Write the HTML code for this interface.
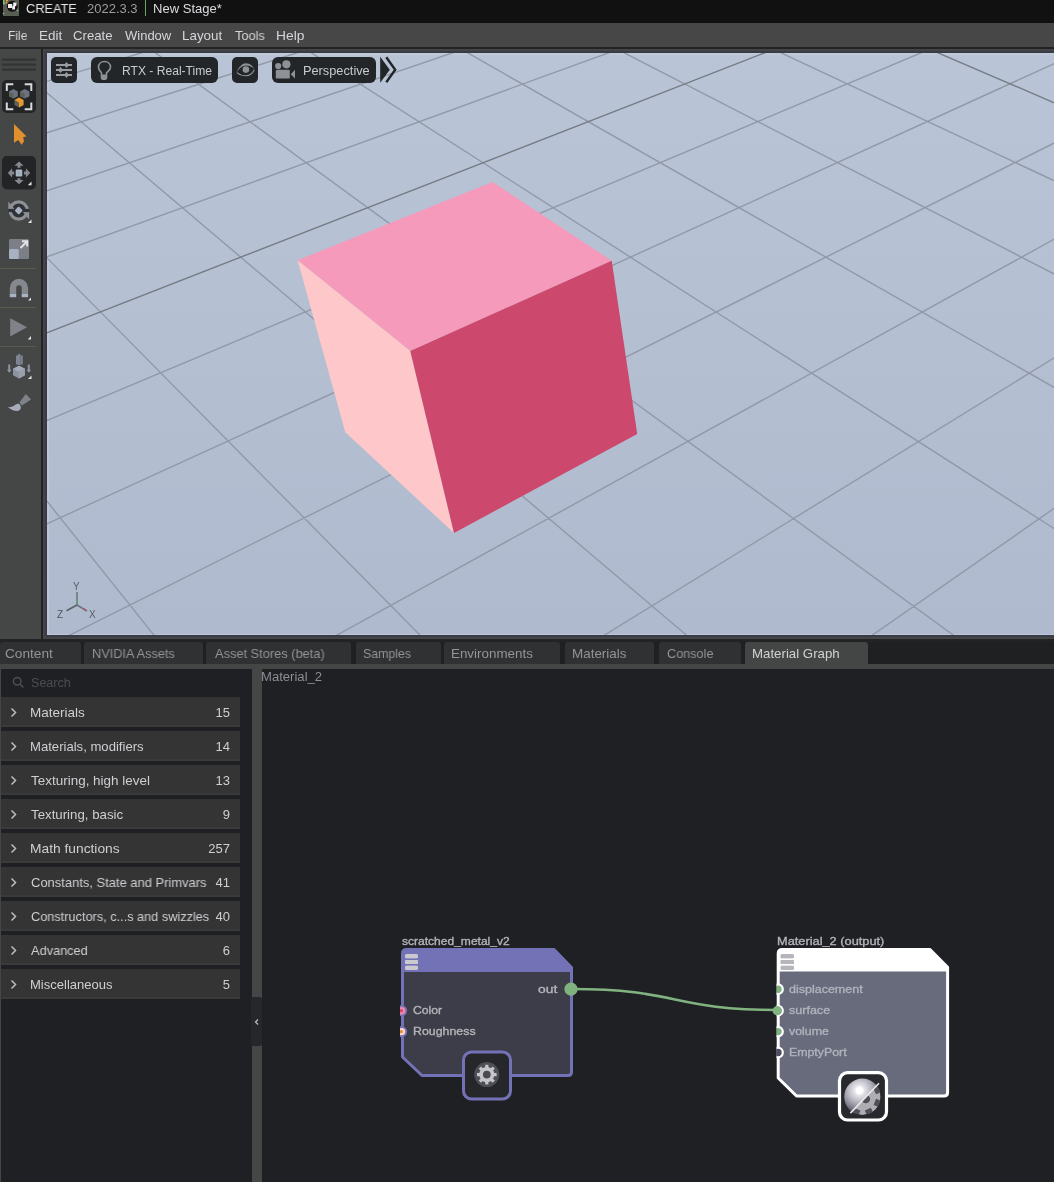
<!DOCTYPE html>
<html><head><meta charset="utf-8">
<style>
*{margin:0;padding:0;box-sizing:border-box}
html,body{width:1054px;height:1182px;overflow:hidden;background:#1f2023;font-family:"Liberation Sans",sans-serif;position:relative}
.a{position:absolute}
.t{position:absolute;white-space:nowrap;line-height:1;will-change:transform}
</style></head><body>
<div class="a" style="left:0;top:0;width:1054px;height:23px;background:#111111"></div>
<svg class="a" style="left:0;top:0" width="22" height="22">
<rect x="3" y="0" width="16" height="16" fill="#5a5e52"/>
<path d="M3.8 0V3.6H5" stroke="#88d088" stroke-width="1.3" fill="none"/>
<rect x="6" y="0" width="2" height="1.2" fill="#f0a030"/><circle cx="6.5" cy="2.5" r="0.9" fill="#f0a030"/>
<circle cx="12.3" cy="6.3" r="5.5" fill="#141414"/>
<rect x="8" y="4" width="4.2" height="4" fill="#f2eef2"/>
<path d="M13.2 2.5H16.5V5.5L15 6.5V9.5H12.2V6.5L13.2 5.5Z" fill="#f2eef2"/>
<circle cx="17.5" cy="10.5" r="0.8" fill="#80c880"/><circle cx="3.5" cy="13.5" r="0.8" fill="#80c880"/>
</svg>
<div class="t" style="left:25.96px;top:1.50px;font-size:13px;color:#e6e6ea;transform:scaleX(0.9828);transform-origin:0 0">CREATE</div>
<div class="t" style="left:86.65px;top:1.50px;font-size:13px;color:#9c9ca0;transform:scaleX(0.9973);transform-origin:0 0">2022.3.3</div>
<div class="a" style="left:145px;top:0;width:1px;height:16px;background:#6aa86a"></div>
<div class="t" style="left:153.36px;top:1.50px;font-size:13px;color:#dcdce0;transform:scaleX(1.0024);transform-origin:0 0">New Stage*</div>
<div class="a" style="left:0;top:23px;width:1054px;height:24px;background:#464746"></div>
<div class="t" style="left:8.44px;top:29.30px;font-size:13px;color:#d6d6da;transform:scaleX(0.9272);transform-origin:0 0">File</div>
<div class="t" style="left:38.72px;top:29.30px;font-size:13px;color:#d6d6da;transform:scaleX(1.0351);transform-origin:0 0">Edit</div>
<div class="t" style="left:73.44px;top:29.30px;font-size:13px;color:#d6d6da;transform:scaleX(1.0142);transform-origin:0 0">Create</div>
<div class="t" style="left:124.64px;top:29.30px;font-size:13px;color:#d6d6da;transform:scaleX(0.9910);transform-origin:0 0">Window</div>
<div class="t" style="left:182.23px;top:29.30px;font-size:13px;color:#d6d6da;transform:scaleX(1.0292);transform-origin:0 0">Layout</div>
<div class="t" style="left:234.74px;top:29.30px;font-size:13px;color:#d6d6da;transform:scaleX(0.9818);transform-origin:0 0">Tools</div>
<div class="t" style="left:275.80px;top:29.30px;font-size:13px;color:#d6d6da;transform:scaleX(1.0614);transform-origin:0 0">Help</div>
<div class="a" style="left:0;top:47px;width:1054px;height:2px;background:#222324"></div>
<div class="a" style="left:0;top:49px;width:41px;height:590px;background:#454646"></div>
<div class="a" style="left:41px;top:49px;width:2px;height:593px;background:#222324"></div>
<svg class="a" style="left:0;top:49px" width="41" height="380" viewBox="0 49 41 380">
<g fill="#323333"><rect x="2" y="58.5" width="34" height="2.2"/><rect x="2" y="63.5" width="34" height="2.2"/><rect x="2" y="68.5" width="34" height="2.2"/></g>
<rect x="2" y="80" width="34" height="33" rx="5" fill="#222426"/>
<g stroke="#d9d9de" stroke-width="2" fill="none">
<path d="M6.8 91V84.3H13.3"/><path d="M24.7 84.3H31.3V91"/><path d="M6.8 102.5V109.3H13.3"/><path d="M24.7 109.3H31.3V102.5"/>
</g>
<g>
<polygon points="13.4,89 17.8,91.4 17.8,96.2 13.4,98.6 9,96.2 9,91.4" fill="#6c7282"/>
<polygon points="9,91.4 13.4,93.8 13.4,98.6 9,96.2" fill="#5f6356"/>
<polygon points="24.8,89 29.4,91.4 29.4,96.2 24.8,98.6 20.2,96.2 20.2,91.4" fill="#6c7282"/>
<polygon points="20.2,91.4 24.8,93.8 24.8,98.6 20.2,96.2" fill="#5f6356"/>
<polygon points="19,97.6 23.5,100.1 23.5,105 19,107.5 14.5,105 14.5,100.1" fill="#5f6458"/>
<polygon points="19,97.6 23.5,100.1 23.5,105 19,107.5 19,102.6 14.5,100.1" fill="#e8962e"/>
</g>
<polygon points="14,124 26.6,136.6 23.2,137 24,141.5 21.5,144.8 18.3,140 14,142.8" fill="#e0902e"/>
<rect x="2" y="156" width="34" height="33.5" rx="5" fill="#222426"/>
<g fill="#85888e">
<polygon points="19,161.6 23.6,165.7 20.5,165.7 20.5,167.8 17.5,167.8 17.5,165.7 14.4,165.7"/>
<polygon points="19,184.2 23.6,180.1 20.5,180.1 20.5,178.2 17.5,178.2 17.5,180.1 14.4,180.1"/>
<polygon points="7.8,172.9 12.1,168.3 12.1,171.4 14.1,171.4 14.1,174.4 12.1,174.4 12.1,177.5"/>
<polygon points="30.2,172.9 25.9,168.3 25.9,171.4 23.9,171.4 23.9,174.4 25.9,174.4 25.9,177.5"/>
</g>
<rect x="15.7" y="169.6" width="6.6" height="6.8" rx="1" fill="#a9b2c3"/>
<circle cx="18.6" cy="173.3" r="0.6" fill="#5fb060"/>
<polygon points="31.5,181.5 31.5,185.3 27.8,185.3" fill="#e6e6ea"/>
<circle cx="18.7" cy="210.5" r="10.3" fill="#2f3238"/>
<circle cx="18.7" cy="210.5" r="8.65" fill="none" stroke="#8d9095" stroke-width="3.3"/>
<polygon points="8.3,201.5 8.3,209 14.6,209" fill="#8d9095"/>
<polygon points="29.1,219.6 29.1,212 22.8,212" fill="#8d9095"/>
<rect x="8.2" y="208.9" width="6.4" height="3.2" fill="#2f3238"/>
<rect x="22.8" y="208.9" width="6.4" height="3.2" fill="#2f3238"/>
<rect x="15.8" y="207.6" width="5.8" height="5.8" rx="1" transform="rotate(45 18.7 210.5)" fill="#a9b2c3"/>
<polygon points="31.5,219.5 31.5,223 28,223" fill="#e6e6ea"/>
<rect x="9" y="239" width="20" height="20" rx="1.5" fill="#7c7f85"/>
<rect x="9" y="249" width="9.8" height="10" rx="1.5" fill="#a7b1c2"/>
<path d="M20.5 248L27 241.5M22 241.3H27.2V246.5" stroke="#e2e2e6" stroke-width="2" fill="none"/>
<rect x="0" y="268" width="36" height="1" fill="#5a5b50"/>
<path d="M9.8 293.5V288A9.15 9.15 0 0 1 28.1 288V293.5H21.7V288A2.75 2.75 0 0 0 16.2 288V293.5Z" fill="#85888e"/>
<rect x="9.8" y="293.6" width="6.4" height="3.6" fill="#a9b3c4"/>
<rect x="21.7" y="293.6" width="6.4" height="3.6" fill="#a9b3c4"/>
<polygon points="31,297.5 31,300.5 28,300.5" fill="#e6e6ea"/>
<rect x="0" y="307" width="36" height="1" fill="#5a5b50"/>
<polygon points="10.2,318.2 27.1,327.3 10.2,336.5" fill="#7f8288"/>
<polygon points="31,336 31,339.5 27.8,339.5" fill="#e6e6ea"/>
<rect x="0" y="346" width="36" height="1" fill="#5a5b50"/>
<g fill="#7f8592"><rect x="16" y="355.5" width="2.2" height="9"/><rect x="18" y="354" width="2.4" height="11"/><rect x="20.5" y="355.5" width="2.2" height="9"/></g>
<polygon points="19,365.8 25,368.8 25,375.3 19,378.4 13,375.3 13,368.8" fill="#8d93a0"/>
<polygon points="19,365.8 25,368.8 19,371.8 13,368.8" fill="#a6adba"/>
<polygon points="19,371.8 25,368.8 25,375.3 19,378.4" fill="#9a9fab"/>
<g fill="#8d93a0"><rect x="8.2" y="364.5" width="2" height="5.5"/><polygon points="6.8,369.8 11.6,369.8 9.2,372.8"/>
<rect x="27.8" y="364.5" width="2" height="5.5"/><polygon points="26.4,369.8 31.2,369.8 28.8,372.8"/></g>
<polygon points="31.5,375.5 31.5,379 28,379" fill="#e6e6ea"/>
<polygon points="25.8,393.9 31.1,399.5 22,405.4 19.4,402.4" fill="#7f8288"/>
<path d="M7.2 406.4C11 408.8 14 405 17 404C19.5 403.3 21 405.5 20.8 408C20.2 411.8 14 412.5 7.2 406.4Z" fill="#a5adbc"/>
</svg>
<div class="a" style="left:43px;top:49px;width:1011px;height:590px;background:#444646"></div>
<div class="a" style="left:0;top:639px;width:1054px;height:3px;background:#222324"></div>
<svg class="a" style="left:0;top:0" width="1054" height="640" viewBox="0 0 1054 640">
<defs>
<linearGradient id="vbg" x1="0" y1="0" x2="0" y2="1">
<stop offset="0" stop-color="#b9c4d6"/><stop offset="1" stop-color="#afbace"/>
</linearGradient>
<clipPath id="vc"><rect x="47" y="53" width="1007" height="582"/></clipPath>
</defs>
<rect x="47" y="53" width="1007" height="582" fill="url(#vbg)"/>
<path d="M46 636V52H1054M46 636H1054" stroke="#393c48" stroke-width="2" fill="none"/>
<path d="M48 635V54H1054" stroke="#c8cdd8" stroke-width="2" fill="none" opacity="0.55"/>
<path d="M47 634.5H1054" stroke="#c9d1de" stroke-width="1" fill="none" opacity="0.5"/>
<g clip-path="url(#vc)">
<path d="M-299.7 -201.1L-7440.6 1089.5M1858.8 -205.0L8697.1 1148.1M-192.7 -201.3L-7104.5 1090.7M1750.0 -204.8L8314.5 1146.8M-85.6 -201.5L-6767.5 1092.0M1641.2 -204.6L7933.0 1145.4M21.6 -201.7L-6429.5 1093.2M1532.6 -204.4L7552.7 1144.0M128.9 -201.9L-6090.5 1094.4M1424.0 -204.2L7173.5 1142.6M236.3 -202.1L-5750.6 1095.7M1315.6 -204.0L6795.5 1141.2M343.8 -202.3L-5409.7 1096.9M1207.2 -203.8L6418.7 1139.9M451.4 -202.5L-5067.8 1098.1M1099.0 -203.6L6042.9 1138.5M559.1 -202.6L-4724.9 1099.4M990.8 -203.4L5668.3 1137.1M666.9 -202.8L-4381.0 1100.6M882.7 -203.2L5294.8 1135.8M774.8 -203.0L-4036.1 1101.9M774.8 -203.0L4922.5 1134.4M882.7 -203.2L-3690.2 1103.1M666.9 -202.8L4551.2 1133.1M990.8 -203.4L-3343.3 1104.4M559.1 -202.6L4181.1 1131.7M1099.0 -203.6L-2995.5 1105.7M451.4 -202.5L3812.1 1130.4M1207.2 -203.8L-2646.6 1106.9M1315.6 -204.0L-2296.6 1108.2M236.3 -202.1L3077.3 1127.7M128.9 -201.9L2711.6 1126.4M1532.6 -204.4L-1593.7 1110.8M21.6 -201.7L2347.0 1125.1M1641.2 -204.6L-1240.7 1112.0M-85.6 -201.5L1983.4 1123.8M1750.0 -204.8L-886.7 1113.3M-192.7 -201.3L1620.9 1122.4M1858.8 -205.0L-531.6 1114.6M-299.7 -201.1L1259.5 1121.1M1967.7 -205.2L-175.5 1115.9M-406.6 -200.9L899.2 1119.8M2076.8 -205.4L181.7 1117.2M-513.5 -200.7L539.9 1118.5M2185.9 -205.6L539.9 1118.5M-620.2 -200.5L181.7 1117.2M2295.1 -205.8L899.2 1119.8M-726.8 -200.3L-175.5 1115.9M2404.4 -206.0L1259.5 1121.1M-833.4 -200.1L-531.6 1114.6M2513.9 -206.2L1620.9 1122.4M-939.9 -199.9L-886.7 1113.3M2623.4 -206.4L1983.4 1123.8M-1046.2 -199.8L-1240.7 1112.0M2733.0 -206.6L2347.0 1125.1M-1152.5 -199.6L-1593.7 1110.8M2842.7 -206.8L2711.6 1126.4M-1258.7 -199.4L-1945.7 1109.5M2952.5 -207.0L3077.3 1127.7M-1364.7 -199.2L-2296.6 1108.2M3062.4 -207.2L3444.2 1129.1M-1470.7 -199.0L-2646.6 1106.9M3172.5 -207.3L3812.1 1130.4M-1576.6 -198.8L-2995.5 1105.7" stroke="#9199a8" stroke-width="1.4" fill="none"/>
<path d="M343.8 -202.3L3444.2 1129.1M1424.0 -204.2L-1945.7 1109.5" stroke="#767b84" stroke-width="1.4" fill="none"/>
<polygon points="492.7,182.1 297.6,260.2 410.3,351 611.7,260.8" fill="#f69abb"/>
<polygon points="297.6,260.2 410.3,351 454,533 345.3,432.2" fill="#fec8ca"/>
<polygon points="410.3,351 611.7,260.8 637.2,434 454,533" fill="#cc486c"/>
</g>
<!-- axis gizmo -->
<g stroke-width="1.6" fill="none">
<path d="M77 605V592" stroke="#6f747c"/><path d="M77 605L66.5 610.8" stroke="#5c6068"/><path d="M77 605L87 611" stroke="#6f747c"/>
</g>
<circle cx="84.5" cy="609.5" r="1" fill="#d04060"/>
<rect x="76.2" y="599" width="1.6" height="5" fill="#5ea070"/>
<!-- overlay buttons -->
<rect x="51" y="57" width="26" height="26" rx="5" fill="#232629"/>
<g stroke="#9a9da3" stroke-width="2"><path d="M56 65H72M56 70H72M56 75H72"/></g>
<g fill="#9a9da3"><polygon points="66.5,62 69,65 66.5,68 64,65"/><polygon points="60.5,67 63,70 60.5,73 58,70"/><polygon points="66.5,72 69,75 66.5,78 64,75"/></g>
<rect x="91" y="57" width="127" height="26" rx="6" fill="#232629"/>
<path d="M104.5 61.5C101 61.5 98.5 64 98.5 67.2C98.5 70 100.5 71.3 101.5 73V77.5C101.5 78.8 102.5 79.3 104 79.3C105.5 79.3 106.5 78.8 106.5 77.5V73C107.5 71.3 110.5 70 110.5 67.2C110.5 64 108 61.5 104.5 61.5Z" fill="none" stroke="#8e9196" stroke-width="1.6"/>
<rect x="101.8" y="74.5" width="4.6" height="4.5" fill="#8e9196"/>
<rect x="232" y="57" width="26" height="26" rx="5" fill="#232629"/>
<path d="M236.3 72.6C239 66.5 242.5 63.2 246 63.2C249.5 63.2 252.5 65.5 254.6 69.2C252.2 66.9 249.5 65.6 246 65.6C242.5 65.6 239.5 68 236.3 72.6Z" fill="#8e9196"/>
<circle cx="245.9" cy="69.6" r="3.3" fill="#8e9196"/>
<path d="M236.8 72.6C240 75.2 243 75.8 246 75.8C249.5 75.8 252.5 73.5 254.4 69.8" stroke="#8e9196" stroke-width="1.1" fill="none"/>
<rect x="272" y="57" width="104" height="26" rx="6" fill="#232629"/>
<g fill="#8e9196"><circle cx="278.2" cy="66" r="3.1"/><circle cx="286.4" cy="64.3" r="4.1"/><rect x="275.8" y="69.7" width="14" height="8.9" rx="1.2"/><polygon points="290.8,74.2 295,69.7 295,78.6"/></g>
<polygon points="380.2,56.8 389.8,69.8 380.2,82.8" fill="#232629"/>
<path d="M386.3 57.3L395.2 69.8L386.3 82.3" stroke="#232629" stroke-width="2.4" fill="none"/>
</svg>
<div class="t" style="left:122.23px;top:65.04px;font-size:12px;color:#c9cacd;transform:scaleX(1.0075);transform-origin:0 0">RTX - Real-Time</div>
<div class="t" style="left:303.18px;top:64.87px;font-size:12.2px;color:#c9cacd;transform:scaleX(1.0479);transform-origin:0 0">Perspective</div>
<div class="t" style="left:73.0px;top:581.53px;font-size:10px;color:#5a5e66">Y</div>
<div class="t" style="left:57.0px;top:610.03px;font-size:10px;color:#4f535b">Z</div>
<div class="t" style="left:88.5px;top:610.03px;font-size:10px;color:#5a5e66">X</div>
<div class="a" style="left:0;top:642px;width:1054px;height:22px;background:#1f2022"></div>
<div class="a" style="left:0px;top:642px;width:81px;height:22px;background:#303132;border-radius:3px 3px 0 0"></div>
<div class="t" style="left:5.02px;top:647.00px;font-size:13px;color:#939497;transform:scaleX(1.0495);transform-origin:0 0">Content</div>
<div class="a" style="left:84px;top:642px;width:119px;height:22px;background:#303132;border-radius:3px 3px 0 0"></div>
<div class="t" style="left:91.98px;top:647.00px;font-size:13px;color:#939497;transform:scaleX(0.9787);transform-origin:0 0">NVIDIA Assets</div>
<div class="a" style="left:206px;top:642px;width:145px;height:22px;background:#303132;border-radius:3px 3px 0 0"></div>
<div class="t" style="left:214.94px;top:647.00px;font-size:13px;color:#939497;transform:scaleX(0.9858);transform-origin:0 0">Asset Stores (beta)</div>
<div class="a" style="left:355.5px;top:642px;width:85.0px;height:22px;background:#303132;border-radius:3px 3px 0 0"></div>
<div class="t" style="left:363.44px;top:647.00px;font-size:13px;color:#939497;transform:scaleX(0.9489);transform-origin:0 0">Samples</div>
<div class="a" style="left:444px;top:642px;width:116px;height:22px;background:#303132;border-radius:3px 3px 0 0"></div>
<div class="t" style="left:451.13px;top:647.00px;font-size:13px;color:#939497;transform:scaleX(1.0295);transform-origin:0 0">Environments</div>
<div class="a" style="left:565px;top:642px;width:89px;height:22px;background:#303132;border-radius:3px 3px 0 0"></div>
<div class="t" style="left:572.43px;top:647.00px;font-size:13px;color:#939497;transform:scaleX(1.0328);transform-origin:0 0">Materials</div>
<div class="a" style="left:658.5px;top:642px;width:82.0px;height:22px;background:#303132;border-radius:3px 3px 0 0"></div>
<div class="t" style="left:666.77px;top:647.00px;font-size:13px;color:#939497;transform:scaleX(0.9747);transform-origin:0 0">Console</div>
<div class="a" style="left:745px;top:642px;width:123px;height:22px;background:#444646;border-radius:3px 3px 0 0"></div>
<div class="t" style="left:752.14px;top:647.00px;font-size:13px;color:#d2d2d4;transform:scaleX(1.0201);transform-origin:0 0">Material Graph</div>
<div class="a" style="left:0;top:664px;width:1054px;height:5px;background:#444646"></div>
<div class="a" style="left:0;top:669px;width:1px;height:513px;background:#444646"></div>
<svg class="a" style="left:0;top:669px" width="40" height="30" viewBox="0 669 40 30">
<circle cx="17.2" cy="681.2" r="3.8" stroke="#4c4e52" stroke-width="1.5" fill="none"/>
<path d="M19.8 684L23.3 687.5" stroke="#4c4e52" stroke-width="1.6"/>
</svg>
<div class="t" style="left:31.23px;top:676.64px;font-size:12px;color:#4c4e52;transform:scaleX(1.0475);transform-origin:0 0">Search</div>
<div class="a" style="left:1px;top:697px;width:239px;height:30px;background:#343435;border-bottom:2.5px solid #3a3a3b"></div>
<svg class="a" style="left:9px;top:707px" width="10" height="11"><path d="M2.5 1.5L6.5 5.5L2.5 9.5" stroke="#bdbdc0" stroke-width="1.5" fill="none"/></svg>
<div class="t" style="left:30.22px;top:705.80px;font-size:13px;color:#cfcfd2;transform:scaleX(1.0387);transform-origin:0 0">Materials</div>
<div class="t" style="left:230.0px;top:705.80px;font-size:13px;color:#cfcfd2;transform:translateX(-100%)">15</div>
<div class="a" style="left:1px;top:731px;width:239px;height:30px;background:#343435;border-bottom:2.5px solid #3a3a3b"></div>
<svg class="a" style="left:9px;top:741px" width="10" height="11"><path d="M2.5 1.5L6.5 5.5L2.5 9.5" stroke="#bdbdc0" stroke-width="1.5" fill="none"/></svg>
<div class="t" style="left:30.25px;top:739.80px;font-size:13px;color:#cfcfd2;transform:scaleX(1.0080);transform-origin:0 0">Materials, modifiers</div>
<div class="t" style="left:230.0px;top:739.80px;font-size:13px;color:#cfcfd2;transform:translateX(-100%)">14</div>
<div class="a" style="left:1px;top:765px;width:239px;height:30px;background:#343435;border-bottom:2.5px solid #3a3a3b"></div>
<svg class="a" style="left:9px;top:775px" width="10" height="11"><path d="M2.5 1.5L6.5 5.5L2.5 9.5" stroke="#bdbdc0" stroke-width="1.5" fill="none"/></svg>
<div class="t" style="left:31.03px;top:773.80px;font-size:13px;color:#cfcfd2;transform:scaleX(1.0356);transform-origin:0 0">Texturing, high level</div>
<div class="t" style="left:230.0px;top:773.80px;font-size:13px;color:#cfcfd2;transform:translateX(-100%)">13</div>
<div class="a" style="left:1px;top:799px;width:239px;height:30px;background:#343435;border-bottom:2.5px solid #3a3a3b"></div>
<svg class="a" style="left:9px;top:809px" width="10" height="11"><path d="M2.5 1.5L6.5 5.5L2.5 9.5" stroke="#bdbdc0" stroke-width="1.5" fill="none"/></svg>
<div class="t" style="left:31.03px;top:807.80px;font-size:13px;color:#cfcfd2;transform:scaleX(1.0204);transform-origin:0 0">Texturing, basic</div>
<div class="t" style="left:230.0px;top:807.80px;font-size:13px;color:#cfcfd2;transform:translateX(-100%)">9</div>
<div class="a" style="left:1px;top:833px;width:239px;height:30px;background:#343435;border-bottom:2.5px solid #3a3a3b"></div>
<svg class="a" style="left:9px;top:843px" width="10" height="11"><path d="M2.5 1.5L6.5 5.5L2.5 9.5" stroke="#bdbdc0" stroke-width="1.5" fill="none"/></svg>
<div class="t" style="left:30.20px;top:841.80px;font-size:13px;color:#cfcfd2;transform:scaleX(1.0606);transform-origin:0 0">Math functions</div>
<div class="t" style="left:230.0px;top:841.80px;font-size:13px;color:#cfcfd2;transform:translateX(-100%)">257</div>
<div class="a" style="left:1px;top:867px;width:239px;height:30px;background:#343435;border-bottom:2.5px solid #3a3a3b"></div>
<svg class="a" style="left:9px;top:877px" width="10" height="11"><path d="M2.5 1.5L6.5 5.5L2.5 9.5" stroke="#bdbdc0" stroke-width="1.5" fill="none"/></svg>
<div class="t" style="left:30.65px;top:875.80px;font-size:13px;color:#cfcfd2;transform:scaleX(0.9956);transform-origin:0 0">Constants, State and Primvars</div>
<div class="t" style="left:230.0px;top:875.80px;font-size:13px;color:#cfcfd2;transform:translateX(-100%)">41</div>
<div class="a" style="left:1px;top:901px;width:239px;height:30px;background:#343435;border-bottom:2.5px solid #3a3a3b"></div>
<svg class="a" style="left:9px;top:911px" width="10" height="11"><path d="M2.5 1.5L6.5 5.5L2.5 9.5" stroke="#bdbdc0" stroke-width="1.5" fill="none"/></svg>
<div class="t" style="left:30.66px;top:909.80px;font-size:13px;color:#cfcfd2;transform:scaleX(0.9787);transform-origin:0 0">Constructors, c...s and swizzles</div>
<div class="t" style="left:230.0px;top:909.80px;font-size:13px;color:#cfcfd2;transform:translateX(-100%)">40</div>
<div class="a" style="left:1px;top:935px;width:239px;height:30px;background:#343435;border-bottom:2.5px solid #3a3a3b"></div>
<svg class="a" style="left:9px;top:945px" width="10" height="11"><path d="M2.5 1.5L6.5 5.5L2.5 9.5" stroke="#bdbdc0" stroke-width="1.5" fill="none"/></svg>
<div class="t" style="left:31.24px;top:943.80px;font-size:13px;color:#cfcfd2;transform:scaleX(0.9829);transform-origin:0 0">Advanced</div>
<div class="t" style="left:230.0px;top:943.80px;font-size:13px;color:#cfcfd2;transform:translateX(-100%)">6</div>
<div class="a" style="left:1px;top:969px;width:239px;height:30px;background:#343435;border-bottom:2.5px solid #3a3a3b"></div>
<svg class="a" style="left:9px;top:979px" width="10" height="11"><path d="M2.5 1.5L6.5 5.5L2.5 9.5" stroke="#bdbdc0" stroke-width="1.5" fill="none"/></svg>
<div class="t" style="left:30.26px;top:977.80px;font-size:13px;color:#cfcfd2;transform:scaleX(1.0017);transform-origin:0 0">Miscellaneous</div>
<div class="t" style="left:230.0px;top:977.80px;font-size:13px;color:#cfcfd2;transform:translateX(-100%)">5</div>
<div class="a" style="left:252px;top:669px;width:10px;height:513px;background:#454747"></div>
<div class="a" style="left:251px;top:997px;width:11px;height:49px;background:#25282a;border-radius:2px"></div>
<svg class="a" style="left:252px;top:1017px" width="10" height="10"><path d="M6 2.5L3.5 5L6 7.5" stroke="#c0c0c4" stroke-width="1.2" fill="none"/></svg>
<div class="t" style="left:261.35px;top:671.42px;font-size:12.5px;color:#8c8e94;transform:scaleX(1.0467);transform-origin:0 0">Material_2</div>
<svg class="a" style="left:262px;top:669px" width="792" height="513" viewBox="262 669 792 513">
<path d="M571 989C680 989 670 1010 779 1010" stroke="#80b380" stroke-width="2.6" fill="none"/>
<!-- node 1 -->
<path d="M402.5 953.5Q402.5 949.5 406.5 949.5H554L571.5 967.5V1072Q571.5 1075.5 568 1075.5H422L402.5 1057Z" fill="#3c3d48" stroke="#7472b6" stroke-width="3" stroke-linejoin="round"/>
<path d="M402.5 953.5Q402.5 949.5 406.5 949.5H554L571.5 967.5V972H402.5Z" fill="#7472b6"/>
<g fill="#c9c9cf"><rect x="405" y="954" width="13" height="4.5" rx="1.5"/><rect x="405" y="960" width="13" height="4" rx="0.5"/><rect x="405" y="965.5" width="13" height="4.5" rx="1.5"/></g>
<g stroke="#7472b6" stroke-width="1"><path d="M405 959.3H418M405 964.7H418"/></g>
<circle cx="571" cy="989.2" r="6.6" fill="#7fb27f"/>
<clipPath id="pc1"><rect x="400" y="990" width="20" height="60"/></clipPath>
<g clip-path="url(#pc1)">
<circle cx="401.6" cy="1010.7" r="5.6" fill="#7472b6"/>
<circle cx="401.6" cy="1010.7" r="3.7" fill="#f28aa8"/>
<circle cx="401.3" cy="1010.7" r="1.8" fill="#d24c7a"/>
<circle cx="401.6" cy="1031.6" r="5.6" fill="#7472b6"/>
<circle cx="401.6" cy="1031.6" r="3.7" fill="#fcd4cc"/>
<circle cx="401.3" cy="1031.6" r="1.6" fill="#e09030"/>
</g>
<rect x="463.5" y="1052" width="47" height="47" rx="8" fill="#26272b" stroke="#7472b6" stroke-width="3"/>
<g transform="translate(486.8,1074.6)">
<circle r="12.5" fill="#4e4f56"/>
<circle r="7.6" fill="#c6c6ca"/>
<g fill="#c6c6ca">
<rect x="-1.6" y="-9.8" width="3.2" height="19.6"/>
<rect x="-1.6" y="-9.8" width="3.2" height="19.6" transform="rotate(45)"/>
<rect x="-1.6" y="-9.8" width="3.2" height="19.6" transform="rotate(90)"/>
<rect x="-1.6" y="-9.8" width="3.2" height="19.6" transform="rotate(135)"/>
</g>
<circle r="3.9" fill="#4a4b52"/>
</g>
<!-- node 2 -->
<path d="M778.2 953.5Q778.2 949.5 782.2 949.5H930L947.6 967.3V1092.5Q947.6 1096 944 1096H796.5L778.2 1078Z" fill="#676b7c" stroke="#ffffff" stroke-width="3" stroke-linejoin="round"/>
<path d="M778.2 953.5Q778.2 949.5 782.2 949.5H930L947.6 967.3V971.5H778.2Z" fill="#ffffff"/>
<g fill="#b5b5bb"><rect x="780.5" y="954" width="13.5" height="4.5" rx="1.5"/><rect x="780.5" y="960" width="13.5" height="4" rx="0.5"/><rect x="780.5" y="965.5" width="13.5" height="4.5" rx="1.5"/></g>
<g stroke="#ffffff" stroke-width="1"><path d="M780.5 959.3H794M780.5 964.7H794"/></g>
<clipPath id="pc2"><rect x="776.6" y="975" width="20" height="90"/></clipPath>
<g stroke="#ffffff" stroke-width="2.2" clip-path="url(#pc2)">
<circle cx="778" cy="989.2" r="4.8" fill="#7fb27f"/>
<circle cx="778" cy="1010.7" r="4.8" fill="#7fb27f"/>
<circle cx="778" cy="1031.6" r="4.8" fill="#7fb27f"/>
<circle cx="778" cy="1052.5" r="4.8" fill="#4a4e60"/>
</g>
<circle cx="777.2" cy="1010.7" r="4.6" fill="#80b380"/>
<rect x="839.5" y="1072.7" width="47" height="47.3" rx="8" fill="#28292d" stroke="#ffffff" stroke-width="3.2"/>
<defs>
<radialGradient id="sph" gradientUnits="userSpaceOnUse" cx="859.4" cy="1090.4" r="22"><stop offset="0" stop-color="#ffffff"/><stop offset="0.14" stop-color="#ffffff"/><stop offset="0.22" stop-color="#e8e6ec"/><stop offset="0.55" stop-color="#b4b4be"/><stop offset="0.85" stop-color="#7c7d8a"/><stop offset="1" stop-color="#5a5b66"/></radialGradient>
<clipPath id="ul"><polygon points="820,1145.2 910,1051.1 780,1051.1 780,1145.2"/></clipPath>
<clipPath id="lr"><polygon points="820,1145.2 910,1051.1 950,1051.1 950,1145.2"/></clipPath>
<clipPath id="disc"><circle cx="862.4" cy="1096.8" r="18.2"/></clipPath>
</defs>
<circle cx="862.4" cy="1096.8" r="18.2" fill="url(#sph)" clip-path="url(#ul)"/>
<g clip-path="url(#lr)"><g clip-path="url(#disc)">
<circle cx="862.4" cy="1096.8" r="18.2" fill="#adadb2"/>
<g fill="#4e4f57">
<rect x="859.1" y="1077.8" width="6.6" height="5.6" transform="rotate(66 862.4 1096.8)"/>
<rect x="859.1" y="1077.8" width="6.6" height="5.6" transform="rotate(112 862.4 1096.8)"/>
<rect x="859.1" y="1077.8" width="6.6" height="5.6" transform="rotate(156 862.4 1096.8)"/>
<rect x="859.1" y="1077.8" width="6.6" height="5.6" transform="rotate(202 862.4 1096.8)"/>
</g>
<circle cx="865.8" cy="1099" r="4.3" fill="#4e4f57"/>
</g></g>
<path d="M850.4 1113.1L879 1083.2" stroke="#ebe8ee" stroke-width="1.6"/>
</svg>
<div class="t" style="left:402.14px;top:935.38px;font-size:11.6px;color:#b4b4b9;transform:scaleX(1.0380);transform-origin:0 0;-webkit-text-stroke:0.35px #b4b4b9">scratched_metal_v2</div>
<div class="t" style="left:537.84px;top:983.38px;font-size:11.6px;color:#b4b4ba;transform:scaleX(1.1966);transform-origin:0 0;-webkit-text-stroke:0.35px #b4b4ba">out</div>
<div class="t" style="left:412.89px;top:1004.48px;font-size:11.6px;color:#b4b4ba;transform:scaleX(1.0516);transform-origin:0 0;-webkit-text-stroke:0.35px #b4b4ba">Color</div>
<div class="t" style="left:412.51px;top:1025.48px;font-size:11.6px;color:#b4b4ba;transform:scaleX(1.0669);transform-origin:0 0;-webkit-text-stroke:0.35px #b4b4ba">Roughness</div>
<div class="t" style="left:777.28px;top:935.38px;font-size:11.6px;color:#b4b4b9;transform:scaleX(1.1034);transform-origin:0 0;-webkit-text-stroke:0.35px #b4b4b9">Material_2 (output)</div>
<div class="t" style="left:789.00px;top:983.38px;font-size:11.6px;color:#b0b3bc;transform:scaleX(1.0781);transform-origin:0 0;-webkit-text-stroke:0.35px #b0b3bc">displacement</div>
<div class="t" style="left:789.12px;top:1004.38px;font-size:11.6px;color:#b0b3bc;transform:scaleX(1.0813);transform-origin:0 0;-webkit-text-stroke:0.35px #b0b3bc">surface</div>
<div class="t" style="left:789.44px;top:1025.28px;font-size:11.6px;color:#b0b3bc;transform:scaleX(1.0643);transform-origin:0 0;-webkit-text-stroke:0.35px #b0b3bc">volume</div>
<div class="t" style="left:788.51px;top:1046.18px;font-size:11.6px;color:#b0b3bc;transform:scaleX(1.0635);transform-origin:0 0;-webkit-text-stroke:0.35px #b0b3bc">EmptyPort</div>
</body></html>
